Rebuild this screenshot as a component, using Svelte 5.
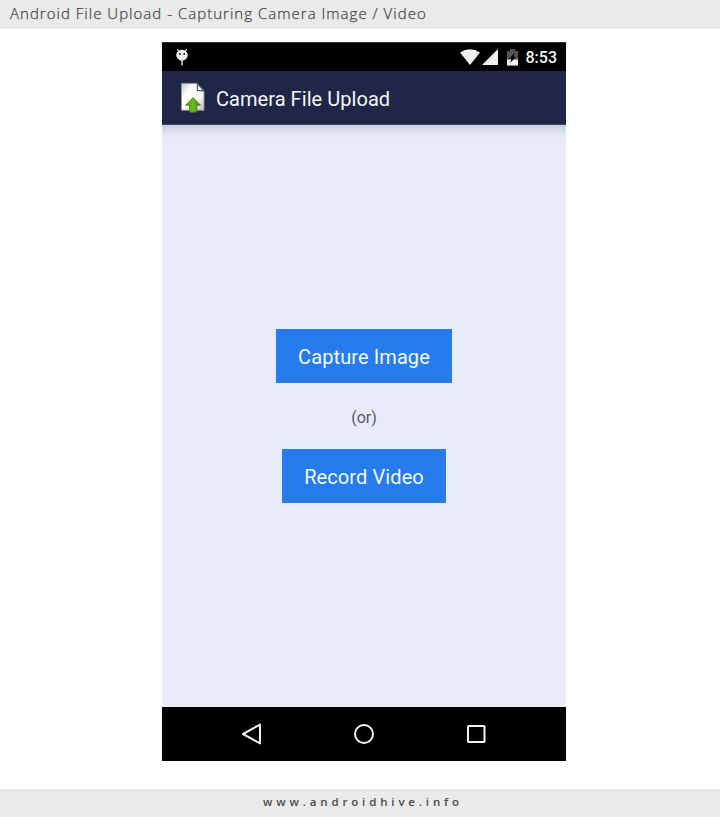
<script>
  const title = 'Android File Upload - Capturing Camera Image / Video';
  const site = 'www.androidhive.info';
</script>

<div class="page">
  <header class="caption"><span>{title}</span></header>

  <main class="phone">
    <div class="status">
      <svg class="debug" width="14" height="18" viewBox="0 0 14 18">
        <path d="M2.2 1L4 3.4M11.8 1L10 3.4" stroke="#e8e8e8" stroke-width="1.1" />
        <ellipse cx="7" cy="7.2" rx="5.7" ry="5.5" fill="#f0f0f0" />
        <path d="M7 11V17.2" stroke="#e0e0e0" stroke-width="1.5" />
        <circle cx="4.8" cy="5.9" r="0.95" fill="#111" />
        <circle cx="9.3" cy="5.9" r="0.95" fill="#111" />
      </svg>
      <div class="indicators">
        <svg class="wifi" width="20" height="16" viewBox="0 0 20 16">
          <path d="M0 3.4Q10-2.9 20 3.4L10 16Z" fill="#f1f1f1" />
        </svg>
        <svg class="signal" width="16" height="16" viewBox="0 0 16 16">
          <path d="M0 16L16 0V16Z" fill="#f1f1f1" />
        </svg>
        <svg class="battery" width="11" height="17" viewBox="0 0 11 17">
          <path d="M3 0H8V2H11V16.5H0V2H3Z" fill="#565656" />
          <path d="M0 10.5H11V16.5H0Z" fill="#f1f1f1" />
          <path d="M7.8 3.4L2 9.9H4.5L3.2 14L9 7.7H6.5Z" fill="#000" />
        </svg>
        <span class="clock">8:53</span>
      </div>
    </div>

    <div class="appbar">
      <svg class="logo" width="26" height="32" viewBox="0 0 26 32">
        <defs>
          <linearGradient id="paper" x1="0" y1="0" x2="1" y2="1">
            <stop offset="0" stop-color="#c9c9c7" />
            <stop offset="0.3" stop-color="#fff" />
            <stop offset="0.7" stop-color="#f4f4f2" />
            <stop offset="1" stop-color="#b5b5b2" />
          </linearGradient>
          <linearGradient id="arrow" x1="0" y1="0" x2="1" y2="0">
            <stop offset="0" stop-color="#459b08" />
            <stop offset="0.5" stop-color="#6abf1c" />
            <stop offset="1" stop-color="#398706" />
          </linearGradient>
        </defs>
        <path d="M1.5 1.4H17.5L24 8.5V28.2H1.5Z" fill="url(#paper)" stroke="#9a9996" stroke-width="0.8" />
        <path d="M17.4 1.6L17.3 8.4L23.8 8.9Z" fill="#f8f8f6" stroke="#4b4c53" stroke-width="1.1" />
        <path d="M13.1 15.6L20.5 23.2H16.8V30.2H9.6V23.2H5.7Z" fill="url(#arrow)" stroke="#3f7a1c" stroke-width="0.8" />
      </svg>
      <h1>Camera File Upload</h1>
    </div>

    <section class="content">
      <button class="capture">Capture Image</button>
      <p>(or)</p>
      <button class="record">Record Video</button>
    </section>

    <nav>
      <svg width="22" height="24" viewBox="0 0 22 24">
        <path d="M19 2.6V21.4L2 12Z" />
      </svg>
      <svg width="22" height="24" viewBox="0 0 22 24">
        <circle cx="11" cy="12" r="9" />
      </svg>
      <svg width="22" height="24" viewBox="0 0 22 24">
        <rect x="3" y="4" width="16.5" height="16" rx="0.5" />
      </svg>
    </nav>
  </main>

  <footer>{site}</footer>
</div>

<style>
  :global(body) { background: #fff; }
  .page {
    width: 720px;
    height: 817px;
    display: flex;
    flex-direction: column;
    align-items: center;
    overflow: hidden;
  }
  .caption {
    width: 100%;
    height: 29px;
    box-sizing: border-box;
    padding-left: 10px;
    background: #eaeaea;
    color: #484848;
    font: 300 15px/26px 'Open Sans', sans-serif;
    letter-spacing: 1.02px;
    -webkit-text-stroke: 0.25px #484848;
    white-space: nowrap;
  }
  .phone {
    width: 404px;
    height: 719px;
    margin: 13px 0 28px 8px;
    display: flex;
    flex-direction: column;
    font-family: Roboto, sans-serif;
  }
  footer {
    width: 100%;
    height: 28px;
    box-sizing: border-box;
    padding-left: 6px;
    background: #eaeaea;
    color: #4a4a4a;
    font: 600 11.5px/26px 'Open Sans', sans-serif;
    letter-spacing: 3.85px;
    text-align: center;
  }
  .status {
    height: 29px;
    box-sizing: border-box;
    padding: 0 9px 0 13px;
    display: flex;
    justify-content: space-between;
    background: #000;
    border-top: 1px solid #353535;
  }
  .debug { margin-top: 5px; }
  .indicators { display: flex; align-items: flex-start; padding-top: 6px; }
  .signal { margin-left: 2px; }
  .battery { margin-left: 9px; }
  .clock {
    margin-left: 8px;
    color: #f4f4f4;
    font-size: 16px;
    font-weight: 500;
    line-height: 18px;
  }
  .appbar {
    height: 54px;
    box-sizing: border-box;
    padding-left: 18px;
    display: flex;
    align-items: center;
    background: #202648;
    border-bottom: 1px solid #424860;
  }
  h1 {
    margin: 2px 0 0 10px;
    color: #f5f6fa;
    font-size: 20px;
    font-weight: 400;
    line-height: 26px;
    letter-spacing: 0.05px;
  }
  .content {
    height: 582px;
    box-sizing: border-box;
    padding-top: 204px;
    display: flex;
    flex-direction: column;
    align-items: center;
    background: linear-gradient(#c6ccdd 0, #dce1f0 6px, #e6eafa 13px, #e8ebfa 18px);
  }
  button {
    height: 54px;
    padding: 2px 0 0;
    border: 0;
    background: #267bed;
    color: #f4f8ff;
    font: 400 20px/26px Roboto, sans-serif;
    letter-spacing: 0.1px;
  }
  .capture { width: 176px; }
  .record { width: 164px; }
  p {
    height: 66px;
    margin: 0;
    color: #535974;
    font-size: 16px;
    line-height: 69px;
  }
  nav {
    height: 54px;
    display: flex;
    justify-content: center;
    align-items: center;
    gap: 90px;
    background: #000;
  }
  nav svg { fill: none; stroke: #f4f4f4; stroke-width: 2; stroke-linejoin: round; }
</style>
